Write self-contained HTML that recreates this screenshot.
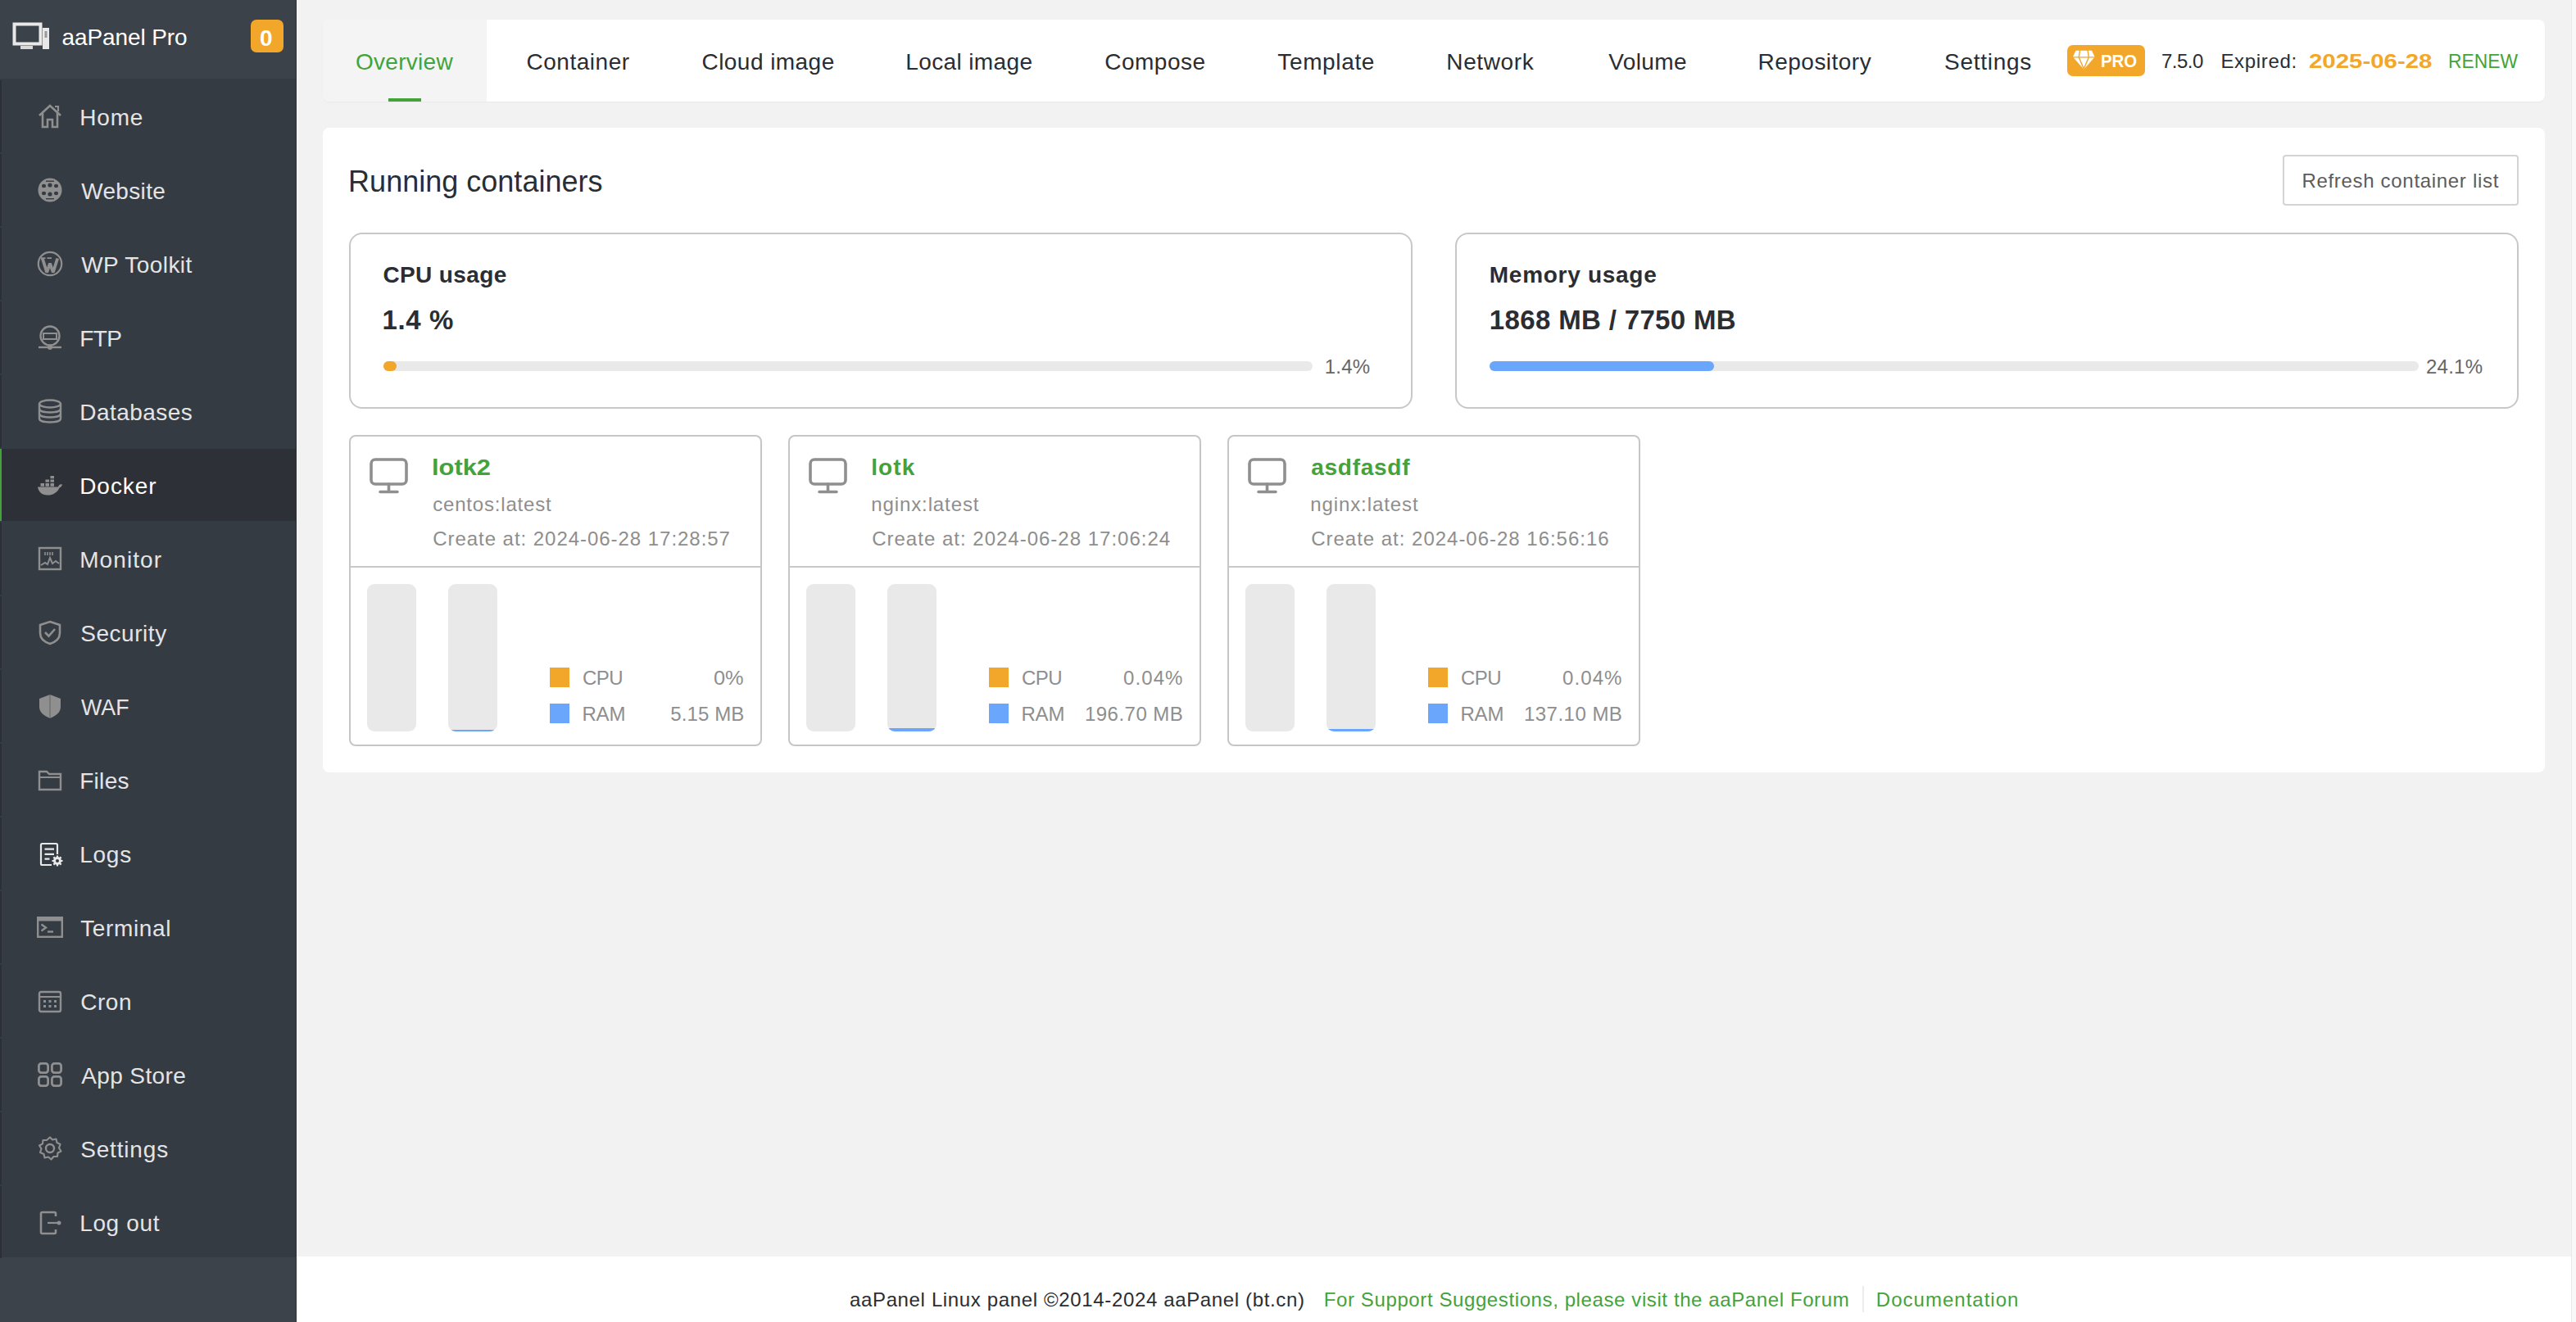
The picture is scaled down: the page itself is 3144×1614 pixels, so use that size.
<!DOCTYPE html>
<html><head><meta charset="utf-8">
<style>
*{box-sizing:border-box;margin:0;padding:0}
html,body{width:3144px;height:1614px;overflow:hidden}
body{background:#f2f2f2;font-family:"Liberation Sans",sans-serif;position:relative;color:#20242a}
.a{position:absolute;white-space:nowrap}
.b{position:absolute}
</style></head><body>
<div class="b" style="left:0;top:0;width:362px;height:1614px;background:#353b43"></div>
<div class="b" style="left:0;top:0;width:362px;height:96px;background:#3c424a"></div>
<div class="b" style="left:0;top:1535px;width:362px;height:79px;background:#3c434b"></div>
<div class="b" style="left:361px;top:0;width:1px;height:1614px;background:#2e3239"></div>
<svg class="b" style="left:14px;top:26px" width="50" height="36" viewBox="0 0 50 36">
<rect x="3.5" y="3.5" width="32" height="24" fill="none" stroke="#e8e8e8" stroke-width="4"/>
<rect x="11" y="30" width="15" height="4" fill="#d8d8d8"/>
<rect x="38" y="8" width="8" height="26" fill="#e8e8e8"/>
<rect x="40.5" y="12" width="3" height="8" fill="#9a9a9a"/>
</svg>
<div class="b" style="left:306px;top:24px;width:40px;height:40px;border-radius:7px;background:#f2a62a"></div>
<div class="b" style="left:0;top:98px;width:361px;height:88px;background:transparent;border-left:2px solid #2c3036"></div>
<svg class="b" style="left:45px;top:126px" width="32" height="32" viewBox="0 0 32 32"><path d="M3 15 L16 3 L29 15" fill="none" stroke="#8f8f8f" stroke-width="2.6" stroke-linejoin="miter"/><path d="M7 12 V29 H13 V20 H19 V29 H25 V12" fill="none" stroke="#8f8f8f" stroke-width="2.6"/><path d="M22 4 h4 v6" fill="none" stroke="#8f8f8f" stroke-width="2.2"/></svg>
<div class="b" style="left:0;top:188px;width:361px;height:88px;background:transparent;border-left:2px solid #2c3036"></div>
<svg class="b" style="left:45px;top:216px" width="32" height="32" viewBox="0 0 32 32"><circle cx="16" cy="16" r="14.5" fill="#8f8f8f"/><g fill="#353b43"><ellipse cx="8.5" cy="11" rx="2.6" ry="2.2"/><ellipse cx="16" cy="10" rx="2.6" ry="2.6"/><ellipse cx="23.5" cy="11" rx="2.6" ry="2.2"/><ellipse cx="8.5" cy="20" rx="2.6" ry="2.2"/><ellipse cx="16" cy="21" rx="2.6" ry="2.6"/><ellipse cx="23.5" cy="20" rx="2.6" ry="2.2"/><rect x="11" y="4.5" width="10" height="1.4"/><rect x="11" y="26" width="10" height="1.4"/></g></svg>
<div class="b" style="left:0;top:278px;width:361px;height:88px;background:transparent;border-left:2px solid #2c3036"></div>
<svg class="b" style="left:45px;top:306px" width="32" height="32" viewBox="0 0 32 32"><circle cx="16" cy="16" r="14.2" fill="none" stroke="#8f8f8f" stroke-width="2.2"/><path d="M6.8 9.5 L12.2 26.5 L16 15.5 L19.8 26.5 L25.2 9.5" fill="none" stroke="#8f8f8f" stroke-width="3.8" stroke-linejoin="bevel"/><path d="M5 9.2 H10.5 M12.5 9.2 H18" stroke="#8f8f8f" stroke-width="1.8"/></svg>
<div class="b" style="left:0;top:368px;width:361px;height:88px;background:transparent;border-left:2px solid #2c3036"></div>
<svg class="b" style="left:45px;top:396px" width="32" height="32" viewBox="0 0 32 32"><circle cx="16" cy="14" r="11.5" fill="none" stroke="#8f8f8f" stroke-width="2.4"/><rect x="8" y="11" width="16" height="7" fill="none" stroke="#8f8f8f" stroke-width="2"/><path d="M2 28 H30" stroke="#8f8f8f" stroke-width="2.4"/><circle cx="16" cy="28" r="3" fill="#8f8f8f"/><path d="M16 25 V27" stroke="#8f8f8f" stroke-width="2"/></svg>
<div class="b" style="left:0;top:458px;width:361px;height:88px;background:transparent;border-left:2px solid #2c3036"></div>
<svg class="b" style="left:45px;top:486px" width="32" height="32" viewBox="0 0 32 32"><g fill="none" stroke="#8f8f8f" stroke-width="2.4"><ellipse cx="16" cy="7" rx="13" ry="4.5"/><path d="M3 7 V25 C3 31 29 31 29 25 V7"/><path d="M3 13 C3 19 29 19 29 13 M3 19 C3 25 29 25 29 19"/></g></svg>
<div class="b" style="left:0;top:548px;width:361px;height:88px;background:#2d3036;border-left:2px solid #43a33a"></div>
<svg class="b" style="left:45px;top:576px" width="32" height="32" viewBox="0 0 32 32"><path d="M1 18.5 H26 C26.5 16 28.5 14.5 31 15.5 C30.5 17.5 29.5 18.8 27.8 19.2 C25 25 20 28.5 13 28.5 C6 28.5 2 24.5 1 18.5 Z" fill="#8f8f8f"/><g fill="#8f8f8f"><rect x="4.5" y="14" width="4.5" height="3.8"/><rect x="10.5" y="14" width="4.5" height="3.8"/><rect x="16.5" y="14" width="4.5" height="3.8"/><rect x="10.5" y="9.5" width="4.5" height="3.2"/><rect x="16.5" y="9.5" width="4.5" height="3.2"/><rect x="16.5" y="5" width="4.5" height="3.2"/></g></svg>
<div class="b" style="left:0;top:638px;width:361px;height:88px;background:transparent;border-left:2px solid #2c3036"></div>
<svg class="b" style="left:45px;top:666px" width="32" height="32" viewBox="0 0 32 32"><rect x="3" y="3" width="26" height="26" fill="none" stroke="#8f8f8f" stroke-width="2.4"/><path d="M5 24 L10 21 L13 23 L16 15 L19 22 L23 19 L27 22" fill="none" stroke="#8f8f8f" stroke-width="2"/><path d="M10 8 v4 M13 8 v4 M16 8 v4 M19 8 v4" stroke="#8f8f8f" stroke-width="1.6"/></svg>
<div class="b" style="left:0;top:728px;width:361px;height:88px;background:transparent;border-left:2px solid #2c3036"></div>
<svg class="b" style="left:45px;top:756px" width="32" height="32" viewBox="0 0 32 32"><path d="M16 3 L28 7 V17 C28 24 22 28 16 30 C10 28 4 24 4 17 V7 Z" fill="none" stroke="#8f8f8f" stroke-width="2.6"/><path d="M10 16 L14.5 20.5 L22 12" fill="none" stroke="#8f8f8f" stroke-width="2.6"/></svg>
<div class="b" style="left:0;top:818px;width:361px;height:88px;background:transparent;border-left:2px solid #2c3036"></div>
<svg class="b" style="left:45px;top:846px" width="32" height="32" viewBox="0 0 32 32"><path d="M16 2 L29 7 V17 C29 24 23 28 16 31 C9 28 3 24 3 17 V7 Z" fill="#8f8f8f"/><path d="M16 2 V31" stroke="#353b43" stroke-width="1" opacity=".5"/></svg>
<div class="b" style="left:0;top:908px;width:361px;height:88px;background:transparent;border-left:2px solid #2c3036"></div>
<svg class="b" style="left:45px;top:936px" width="32" height="32" viewBox="0 0 32 32"><path d="M3 6 H12 L15 9 H29 V28 H3 Z" fill="none" stroke="#8f8f8f" stroke-width="2.4"/><path d="M3 13 H29" stroke="#8f8f8f" stroke-width="2"/></svg>
<div class="b" style="left:0;top:998px;width:361px;height:88px;background:transparent;border-left:2px solid #2c3036"></div>
<svg class="b" style="left:45px;top:1026px" width="32" height="32" viewBox="0 0 32 32"><path d="M25 17 V5.5 Q25 4 23.5 4 H6.5 Q5 4 5 5.5 V28.5 Q5 30 6.5 30 H18" fill="none" stroke="#e8e8e8" stroke-width="2.2"/><path d="M9.5 10.7 H21 M9.5 16.8 H21 M9.5 22.7 H15.5" stroke="#e8e8e8" stroke-width="2.2"/><circle cx="25" cy="25" r="5" fill="#e8e8e8"/><g stroke="#e8e8e8" stroke-width="2.2"><path d="M25 18.5 V31.5 M18.5 25 H31.5 M20.4 20.4 L29.6 29.6 M29.6 20.4 L20.4 29.6"/></g><circle cx="25" cy="25" r="2" fill="#353b43"/></svg>
<div class="b" style="left:0;top:1088px;width:361px;height:88px;background:transparent;border-left:2px solid #2c3036"></div>
<svg class="b" style="left:45px;top:1116px" width="32" height="32" viewBox="0 0 32 32"><rect x="1.2" y="4.2" width="29.6" height="23.6" fill="none" stroke="#8f8f8f" stroke-width="2.4"/><rect x="1" y="4" width="30" height="4.5" fill="#8f8f8f"/><path d="M5.5 12.5 L11 16.5 L5.5 20.5" fill="none" stroke="#8f8f8f" stroke-width="2.4"/><path d="M13 21.5 H20" stroke="#8f8f8f" stroke-width="2.4"/></svg>
<div class="b" style="left:0;top:1178px;width:361px;height:88px;background:transparent;border-left:2px solid #2c3036"></div>
<svg class="b" style="left:45px;top:1206px" width="32" height="32" viewBox="0 0 32 32"><rect x="3" y="5" width="26" height="24" rx="2" fill="none" stroke="#8f8f8f" stroke-width="2.4"/><path d="M3 11 H29" stroke="#8f8f8f" stroke-width="2"/><g fill="#8f8f8f"><rect x="8" y="15" width="3" height="3"/><rect x="14.5" y="15" width="3" height="3"/><rect x="21" y="15" width="3" height="3"/><rect x="8" y="21" width="3" height="3"/><rect x="14.5" y="21" width="3" height="3"/><rect x="21" y="21" width="3" height="3"/></g></svg>
<div class="b" style="left:0;top:1268px;width:361px;height:88px;background:transparent;border-left:2px solid #2c3036"></div>
<svg class="b" style="left:45px;top:1296px" width="32" height="32" viewBox="0 0 32 32"><g fill="none" stroke="#8f8f8f" stroke-width="2.8"><rect x="2.4" y="2.4" width="11.2" height="11.2" rx="3"/><rect x="18.4" y="2.4" width="11.2" height="11.2" rx="3"/><rect x="2.4" y="18.4" width="11.2" height="11.2" rx="3"/><rect x="18.4" y="18.4" width="11.2" height="11.2" rx="3"/></g></svg>
<div class="b" style="left:0;top:1358px;width:361px;height:88px;background:transparent;border-left:2px solid #2c3036"></div>
<svg class="b" style="left:45px;top:1386px" width="32" height="32" viewBox="0 0 32 32"><circle cx="16" cy="16" r="5" fill="none" stroke="#8f8f8f" stroke-width="2.4"/><path d="M16 2.5 L19 5.5 L23.5 4.5 L24.5 9 L28.5 11 L27 15.5 L29.5 19.5 L25.5 21.5 L25 26 L20.5 26 L17.5 29.5 L14 26.5 L9.5 27.5 L8.5 23 L4 21 L5.5 16.5 L3 12.5 L7 10.5 L7.5 6 L12 6 Z" fill="none" stroke="#8f8f8f" stroke-width="2.2" stroke-linejoin="round"/></svg>
<div class="b" style="left:0;top:1448px;width:361px;height:88px;background:transparent;border-left:2px solid #2c3036"></div>
<svg class="b" style="left:45px;top:1476px" width="32" height="32" viewBox="0 0 32 32"><path d="M23 9 V5.5 Q23 4 21.5 4 H6.5 Q5 4 5 5.5 V28.5 Q5 30 6.5 30 H21.5 Q23 30 23 28.5 V25" fill="none" stroke="#8f8f8f" stroke-width="2.6"/><path d="M13 17 H26" stroke="#8f8f8f" stroke-width="2.2"/><circle cx="27" cy="17" r="2.5" fill="#8f8f8f"/></svg>
<div class="b" style="left:394px;top:24px;width:2712px;height:100px;background:#fff;border-radius:8px;box-shadow:0 1px 2px rgba(0,0,0,0.04)"></div>
<div class="b" style="left:394px;top:24px;width:200px;height:100px;background:#f4f4f4;border-radius:8px 0 0 8px"></div>
<div class="b" style="left:474px;top:120px;width:40px;height:4px;background:#43a33a"></div>
<div class="b" style="left:2523px;top:55px;width:95px;height:38px;border-radius:7px;background:#f2a62a"></div>
<svg class="b" style="left:2529px;top:61px" width="28" height="24" viewBox="0 0 28 24">
<path d="M4.4 0.75 H24 L27.7 8.5 L14.3 23.8 L1 8.5 Z" fill="#fff"/>
<path d="M0 8.9 H28 M9.6 0 L8.2 8.9 L14.3 23 L20.4 8.9 L19 0" fill="none" stroke="#f2a62a" stroke-width="1.4"/>
</svg>
<div class="b" style="left:394px;top:156px;width:2712px;height:787px;background:#fff;border-radius:8px"></div>
<div class="b" style="left:2786px;top:189px;width:288px;height:62px;border:2px solid #d4d4d4;border-radius:4px;background:#fff"></div>
<div class="b" style="left:426px;top:284px;width:1298px;height:215px;border:2px solid #c8c8c8;border-radius:16px"></div>
<div class="b" style="left:468px;top:441px;width:1134px;height:12px;border-radius:6px;background:#e9e9e9"></div>
<div class="b" style="left:468px;top:441px;width:16px;height:12px;border-radius:6px;background:#f2a62a"></div>
<div class="b" style="left:1776px;top:284px;width:1298px;height:215px;border:2px solid #c8c8c8;border-radius:16px"></div>
<div class="b" style="left:1818px;top:441px;width:1134px;height:12px;border-radius:6px;background:#e9e9e9"></div>
<div class="b" style="left:1818px;top:441px;width:274px;height:12px;border-radius:6px;background:#6aa6fc"></div>
<div class="b" style="left:426px;top:531px;width:504px;height:380px;border:2px solid #c6c6c6;border-radius:8px"></div>
<div class="b" style="left:426px;top:691px;width:504px;height:2px;background:#c8c8c8"></div>
<svg class="b" style="left:451px;top:559px" width="48" height="44" viewBox="0 0 48 44">
<rect x="2" y="2" width="43" height="30" rx="5" fill="none" stroke="#8f8f8f" stroke-width="3.6"/>
<path d="M23.5 32 V41 M13 41.5 H34" stroke="#8f8f8f" stroke-width="3.6" stroke-linecap="round"/></svg>
<div class="b" style="left:448px;top:713px;width:60px;height:180px;border-radius:9px;background:#e9e9e9;overflow:hidden"><div style="position:absolute;left:0;bottom:0;width:60px;height:0px;background:#6aa6fc"></div></div>
<div class="b" style="left:547px;top:713px;width:60px;height:180px;border-radius:9px;background:#e9e9e9;overflow:hidden"><div style="position:absolute;left:0;bottom:0;width:60px;height:2px;background:#6aa6fc"></div></div>
<div class="b" style="left:671px;top:815px;width:24px;height:24px;background:#f2a62a"></div>
<div class="b" style="left:671px;top:859px;width:24px;height:24px;background:#6aa6fc"></div>
<div class="b" style="left:962px;top:531px;width:504px;height:380px;border:2px solid #c6c6c6;border-radius:8px"></div>
<div class="b" style="left:962px;top:691px;width:504px;height:2px;background:#c8c8c8"></div>
<svg class="b" style="left:987px;top:559px" width="48" height="44" viewBox="0 0 48 44">
<rect x="2" y="2" width="43" height="30" rx="5" fill="none" stroke="#8f8f8f" stroke-width="3.6"/>
<path d="M23.5 32 V41 M13 41.5 H34" stroke="#8f8f8f" stroke-width="3.6" stroke-linecap="round"/></svg>
<div class="b" style="left:984px;top:713px;width:60px;height:180px;border-radius:9px;background:#e9e9e9;overflow:hidden"><div style="position:absolute;left:0;bottom:0;width:60px;height:0px;background:#6aa6fc"></div></div>
<div class="b" style="left:1083px;top:713px;width:60px;height:180px;border-radius:9px;background:#e9e9e9;overflow:hidden"><div style="position:absolute;left:0;bottom:0;width:60px;height:4px;background:#6aa6fc"></div></div>
<div class="b" style="left:1207px;top:815px;width:24px;height:24px;background:#f2a62a"></div>
<div class="b" style="left:1207px;top:859px;width:24px;height:24px;background:#6aa6fc"></div>
<div class="b" style="left:1498px;top:531px;width:504px;height:380px;border:2px solid #c6c6c6;border-radius:8px"></div>
<div class="b" style="left:1498px;top:691px;width:504px;height:2px;background:#c8c8c8"></div>
<svg class="b" style="left:1523px;top:559px" width="48" height="44" viewBox="0 0 48 44">
<rect x="2" y="2" width="43" height="30" rx="5" fill="none" stroke="#8f8f8f" stroke-width="3.6"/>
<path d="M23.5 32 V41 M13 41.5 H34" stroke="#8f8f8f" stroke-width="3.6" stroke-linecap="round"/></svg>
<div class="b" style="left:1520px;top:713px;width:60px;height:180px;border-radius:9px;background:#e9e9e9;overflow:hidden"><div style="position:absolute;left:0;bottom:0;width:60px;height:0px;background:#6aa6fc"></div></div>
<div class="b" style="left:1619px;top:713px;width:60px;height:180px;border-radius:9px;background:#e9e9e9;overflow:hidden"><div style="position:absolute;left:0;bottom:0;width:60px;height:3px;background:#6aa6fc"></div></div>
<div class="b" style="left:1743px;top:815px;width:24px;height:24px;background:#f2a62a"></div>
<div class="b" style="left:1743px;top:859px;width:24px;height:24px;background:#6aa6fc"></div>
<div class="b" style="left:362px;top:1534px;width:2776px;height:80px;background:#fff"></div>
<div class="b" style="left:3138px;top:0;width:6px;height:1614px;background:#f8f8f8;border-left:1px solid #e9e9e9"></div>
<div class="b" style="left:2273px;top:1570px;width:2px;height:32px;background:#ececec"></div>
<div class="a" style="left:75.6px;top:32.1px;font-size:28px;line-height:28px;font-weight:400;color:#ffffff;letter-spacing:-0.11px;">aaPanel Pro</div>
<div class="a" style="left:97.2px;top:130.0px;font-size:28px;line-height:28px;font-weight:400;color:#e4e4e4;letter-spacing:0.833px;">Home</div>
<div class="a" style="left:99.2px;top:220.0px;font-size:28px;line-height:28px;font-weight:400;color:#e4e4e4;letter-spacing:0.333px;">Website</div>
<div class="a" style="left:99.2px;top:310.0px;font-size:28px;line-height:28px;font-weight:400;color:#e4e4e4;letter-spacing:0.422px;">WP Toolkit</div>
<div class="a" style="left:97.2px;top:400.0px;font-size:28px;line-height:28px;font-weight:400;color:#e4e4e4;letter-spacing:-0.6px;">FTP</div>
<div class="a" style="left:97.2px;top:490.0px;font-size:28px;line-height:28px;font-weight:400;color:#e4e4e4;letter-spacing:0.475px;">Databases</div>
<div class="a" style="left:97.2px;top:580.0px;font-size:28px;line-height:28px;font-weight:400;color:#ffffff;letter-spacing:0.96px;">Docker</div>
<div class="a" style="left:97.2px;top:670.0px;font-size:28px;line-height:28px;font-weight:400;color:#e4e4e4;letter-spacing:1.083px;">Monitor</div>
<div class="a" style="left:98.2px;top:760.0px;font-size:28px;line-height:28px;font-weight:400;color:#e4e4e4;letter-spacing:0.543px;">Security</div>
<div class="a" style="left:99.2px;top:850.0px;font-size:28px;line-height:28px;font-weight:400;color:#e4e4e4;transform:scaleX(0.9583);transform-origin:0 0;">WAF</div>
<div class="a" style="left:97.2px;top:940.0px;font-size:28px;line-height:28px;font-weight:400;color:#e4e4e4;letter-spacing:0.3px;">Files</div>
<div class="a" style="left:97.2px;top:1030.0px;font-size:28px;line-height:28px;font-weight:400;color:#e4e4e4;letter-spacing:0.767px;">Logs</div>
<div class="a" style="left:98.2px;top:1120.0px;font-size:28px;line-height:28px;font-weight:400;color:#e4e4e4;letter-spacing:0.643px;">Terminal</div>
<div class="a" style="left:98.2px;top:1210.0px;font-size:28px;line-height:28px;font-weight:400;color:#e4e4e4;letter-spacing:0.533px;">Cron</div>
<div class="a" style="left:99.2px;top:1300.0px;font-size:28px;line-height:28px;font-weight:400;color:#e4e4e4;letter-spacing:0.388px;">App Store</div>
<div class="a" style="left:98.2px;top:1390.0px;font-size:28px;line-height:28px;font-weight:400;color:#e4e4e4;letter-spacing:0.829px;">Settings</div>
<div class="a" style="left:97.2px;top:1480.0px;font-size:28px;line-height:28px;font-weight:400;color:#e4e4e4;letter-spacing:0.633px;">Log out</div>
<div class="a" style="left:317.0px;top:32.6px;font-size:28px;line-height:28px;font-weight:700;color:#ffffff;">0</div>
<div class="a" style="left:434.0px;top:62.0px;font-size:28px;line-height:28px;font-weight:400;color:#43a33a;letter-spacing:0.286px;">Overview</div>
<div class="a" style="left:642.5px;top:62.0px;font-size:28px;line-height:28px;font-weight:400;color:#2a2d32;letter-spacing:0.525px;">Container</div>
<div class="a" style="left:856.5px;top:62.0px;font-size:28px;line-height:28px;font-weight:400;color:#2a2d32;letter-spacing:0.45px;">Cloud image</div>
<div class="a" style="left:1105.3px;top:62.0px;font-size:28px;line-height:28px;font-weight:400;color:#2a2d32;letter-spacing:0.37px;">Local image</div>
<div class="a" style="left:1348.2px;top:62.0px;font-size:28px;line-height:28px;font-weight:400;color:#2a2d32;letter-spacing:0.517px;">Compose</div>
<div class="a" style="left:1559.3px;top:62.0px;font-size:28px;line-height:28px;font-weight:400;color:#2a2d32;letter-spacing:0.643px;">Template</div>
<div class="a" style="left:1765.3px;top:62.0px;font-size:28px;line-height:28px;font-weight:400;color:#2a2d32;letter-spacing:0.617px;">Network</div>
<div class="a" style="left:1963.2px;top:62.0px;font-size:28px;line-height:28px;font-weight:400;color:#2a2d32;letter-spacing:0.38px;">Volume</div>
<div class="a" style="left:2145.6px;top:62.0px;font-size:28px;line-height:28px;font-weight:400;color:#2a2d32;letter-spacing:0.467px;">Repository</div>
<div class="a" style="left:2373.1px;top:62.0px;font-size:28px;line-height:28px;font-weight:400;color:#2a2d32;letter-spacing:0.729px;">Settings</div>
<div class="a" style="left:2563.6px;top:63.5px;font-size:22px;line-height:22px;font-weight:700;color:#ffffff;transform:scaleX(0.9283);transform-origin:0 0;">PRO</div>
<div class="a" style="left:2638.0px;top:62.6px;font-size:24px;line-height:24px;font-weight:400;color:#2a2d32;letter-spacing:-0.5px;">7.5.0</div>
<div class="a" style="left:2710.4px;top:62.6px;font-size:24px;line-height:24px;font-weight:400;color:#2a2d32;letter-spacing:0.686px;">Expired:</div>
<div class="a" style="left:2817.5px;top:62.6px;font-size:24px;line-height:24px;font-weight:700;color:#f2a62a;transform:scaleX(1.2256);transform-origin:0 0;">2025-06-28</div>
<div class="a" style="left:2988.4px;top:62.6px;font-size:24px;line-height:24px;font-weight:400;color:#43a33a;transform:scaleX(0.9506);transform-origin:0 0;">RENEW</div>
<div class="a" style="left:425.1px;top:204.1px;font-size:36px;line-height:36px;font-weight:400;color:#2a2d32;letter-spacing:0.012px;">Running containers</div>
<div class="a" style="left:2809.4px;top:209.0px;font-size:24px;line-height:24px;font-weight:400;color:#5c5c5c;letter-spacing:0.69px;">Refresh container list</div>
<div class="a" style="left:467.5px;top:322.0px;font-size:28px;line-height:28px;font-weight:700;color:#2a2d32;letter-spacing:0.362px;">CPU usage</div>
<div class="a" style="left:466.5px;top:374.0px;font-size:33px;line-height:33px;font-weight:700;color:#2a2d32;letter-spacing:0.625px;">1.4 %</div>
<div class="a" style="left:1616.8px;top:436.0px;font-size:24px;line-height:24px;font-weight:400;color:#666666;letter-spacing:0.2px;">1.4%</div>
<div class="a" style="left:1817.8px;top:322.0px;font-size:28px;line-height:28px;font-weight:700;color:#2a2d32;letter-spacing:0.718px;">Memory usage</div>
<div class="a" style="left:1817.8px;top:374.0px;font-size:33px;line-height:33px;font-weight:700;color:#2a2d32;letter-spacing:0.35px;">1868 MB / 7750 MB</div>
<div class="a" style="left:2961.0px;top:436.0px;font-size:24px;line-height:24px;font-weight:400;color:#666666;letter-spacing:0.25px;">24.1%</div>
<div class="a" style="left:527.0px;top:556.8px;font-size:28px;line-height:28px;font-weight:700;color:#43a33a;transform:scaleX(1.1016);transform-origin:0 0;">lotk2</div>
<div class="a" style="left:528.2px;top:603.5px;font-size:24px;line-height:24px;font-weight:400;color:#8e8e8e;letter-spacing:0.817px;">centos:latest</div>
<div class="a" style="left:528.2px;top:645.9px;font-size:24px;line-height:24px;font-weight:400;color:#8e8e8e;letter-spacing:0.959px;">Create at: 2024-06-28 17:28:57</div>
<div class="a" style="left:710.9px;top:815.9px;font-size:24px;line-height:24px;font-weight:400;color:#8e8e8e;letter-spacing:-0.45px;">CPU</div>
<div class="a" style="left:710.4px;top:859.8px;font-size:24px;line-height:24px;font-weight:400;color:#8e8e8e;letter-spacing:-0.15px;">RAM</div>
<div class="a" style="left:870.8px;top:815.9px;font-size:24px;line-height:24px;font-weight:400;color:#8e8e8e;transform:scaleX(1.0545);transform-origin:0 0;">0%</div>
<div class="a" style="left:818.3px;top:859.8px;font-size:24px;line-height:24px;font-weight:400;color:#8e8e8e;letter-spacing:0.117px;">5.15 MB</div>
<div class="a" style="left:1063.2px;top:556.8px;font-size:28px;line-height:28px;font-weight:700;color:#43a33a;letter-spacing:1.1px;">lotk</div>
<div class="a" style="left:1063.2px;top:603.5px;font-size:24px;line-height:24px;font-weight:400;color:#8e8e8e;letter-spacing:0.9px;">nginx:latest</div>
<div class="a" style="left:1064.2px;top:645.9px;font-size:24px;line-height:24px;font-weight:400;color:#8e8e8e;letter-spacing:1.003px;">Create at: 2024-06-28 17:06:24</div>
<div class="a" style="left:1246.9px;top:815.9px;font-size:24px;line-height:24px;font-weight:400;color:#8e8e8e;letter-spacing:-0.45px;">CPU</div>
<div class="a" style="left:1246.4px;top:859.8px;font-size:24px;line-height:24px;font-weight:400;color:#8e8e8e;letter-spacing:-0.15px;">RAM</div>
<div class="a" style="left:1371.0px;top:815.9px;font-size:24px;line-height:24px;font-weight:400;color:#8e8e8e;letter-spacing:1.1px;">0.04%</div>
<div class="a" style="left:1323.9px;top:859.8px;font-size:24px;line-height:24px;font-weight:400;color:#8e8e8e;letter-spacing:0.487px;">196.70 MB</div>
<div class="a" style="left:1600.2px;top:556.8px;font-size:28px;line-height:28px;font-weight:700;color:#43a33a;letter-spacing:0.743px;">asdfasdf</div>
<div class="a" style="left:1599.2px;top:603.5px;font-size:24px;line-height:24px;font-weight:400;color:#8e8e8e;letter-spacing:0.909px;">nginx:latest</div>
<div class="a" style="left:1600.2px;top:645.9px;font-size:24px;line-height:24px;font-weight:400;color:#8e8e8e;letter-spacing:0.983px;">Create at: 2024-06-28 16:56:16</div>
<div class="a" style="left:1782.9px;top:815.9px;font-size:24px;line-height:24px;font-weight:400;color:#8e8e8e;letter-spacing:-0.45px;">CPU</div>
<div class="a" style="left:1782.4px;top:859.8px;font-size:24px;line-height:24px;font-weight:400;color:#8e8e8e;letter-spacing:-0.15px;">RAM</div>
<div class="a" style="left:1907.0px;top:815.9px;font-size:24px;line-height:24px;font-weight:400;color:#8e8e8e;letter-spacing:1.1px;">0.04%</div>
<div class="a" style="left:1859.9px;top:859.8px;font-size:24px;line-height:24px;font-weight:400;color:#8e8e8e;letter-spacing:0.488px;">137.10 MB</div>
<div class="a" style="left:1037.0px;top:1575.0px;font-size:24px;line-height:24px;font-weight:400;color:#2a2d32;letter-spacing:0.642px;">aaPanel Linux panel ©2014-2024 aaPanel (bt.cn)</div>
<div class="a" style="left:1615.8px;top:1575.0px;font-size:24px;line-height:24px;font-weight:400;color:#43a33a;letter-spacing:0.602px;">For Support Suggestions, please visit the aaPanel Forum</div>
<div class="a" style="left:2289.8px;top:1575.0px;font-size:24px;line-height:24px;font-weight:400;color:#43a33a;letter-spacing:1.017px;">Documentation</div>
</body></html>
